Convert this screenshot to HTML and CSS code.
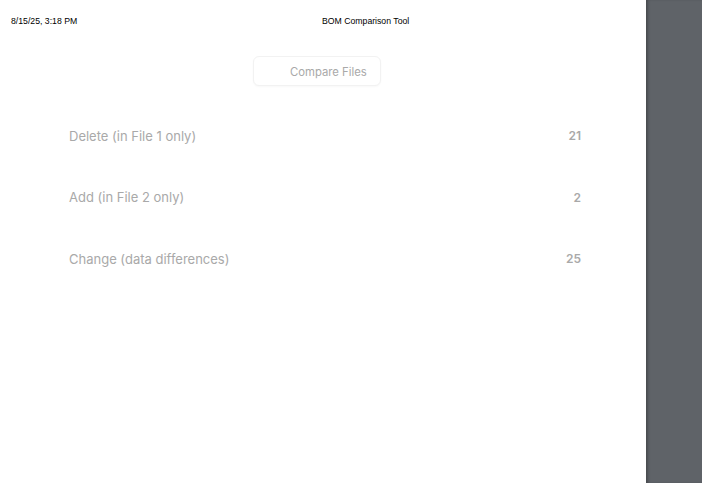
FILE: index.html
```html
<!DOCTYPE html>
<html>
<head>
<meta charset="utf-8">
<link rel="stylesheet" href="styles.css">
</head>
<body>
<div class="viewer">
  <div class="page">
    <div class="print-header">
      <span class="date">8/15/25, 3:18 PM</span>
      <span class="title">BOM Comparison Tool</span>
    </div>
    <div class="toolbar">
      <button class="compare-btn"><span class="btn-icon"></span>Compare Files</button>
    </div>
    <div class="summary">
      <div class="row"><span class="label">Delete (in File 1 only)</span><span class="count">21</span></div>
      <div class="row"><span class="label">Add (in File 2 only)</span><span class="count">2</span></div>
      <div class="row"><span class="label">Change (data differences)</span><span class="count">25</span></div>
    </div>
  </div>
  <div class="gutter"></div>
</div>
</body>
</html>
```
FILE: styles.css
```css
html, body {
  margin: 0;
  padding: 0;
  height: 100%;
}
.viewer {
  display: flex;
  width: 702px;
  height: 483px;
  overflow: hidden;
}
.page {
  width: 646px;
  flex: none;
  background: #fff;
  display: flex;
  flex-direction: column;
}
.gutter {
  flex: 1;
  background: #5f6368;
  box-shadow: inset 3px 0 3px -1px rgba(0,0,0,0.25);
}
.print-header {
  display: flex;
  align-items: center;
  height: 16px;
  margin-top: 13px;
  padding-left: 11px;
  font-family: "Liberation Sans", Arial, sans-serif;
  font-size: 8.7px;
  color: #000;
}
.print-header .date {
  width: 311px;
}
.toolbar {
  display: flex;
  justify-content: center;
  margin-top: 27px;
  padding-right: 12px;
}
.compare-btn {
  display: flex;
  align-items: center;
  width: 128px;
  height: 30px;
  padding: 2px 0 0 14px;
  border: 1px solid #f2f2f2;
  border-radius: 6px;
  background: #fff;
  box-shadow: 0 1px 2px rgba(0,0,0,0.03);
  font-family: Inter, "Noto Sans", sans-serif;
  font-size: 11.3px;
  color: #a9a9a9;
  gap: 8px;
}
.btn-icon {
  width: 14px;
  height: 14px;
}
.summary {
  display: flex;
  flex-direction: column;
  padding: 19px 65px 0 69px;
  font-family: Inter, "Noto Sans", sans-serif;
}
.row {
  display: flex;
  justify-content: space-between;
  align-items: center;
  height: 61.5px;
}
.label {
  font-size: 13px;
  color: #a9a9a9;
}
.count {
  font-size: 12px;
  font-weight: 600;
  color: #a9a9a9;
}
```
